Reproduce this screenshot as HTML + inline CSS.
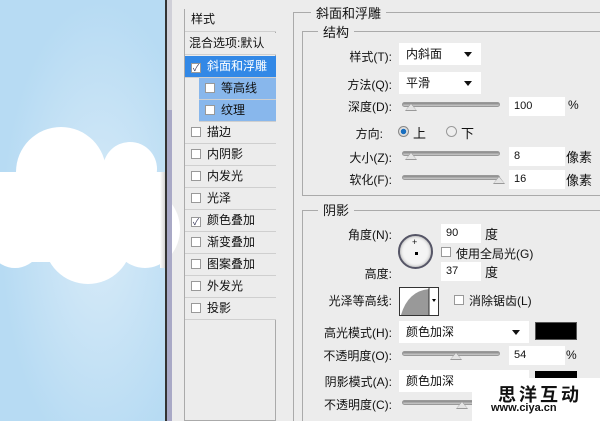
<!DOCTYPE html><html style="overflow:hidden;width:600px;height:421px"><head><meta charset="utf-8"><style>
*{margin:0;padding:0;box-sizing:border-box}
body{width:600px;height:421px;overflow:hidden;position:relative;background:#ececec;font-family:"Liberation Sans","Noto Sans CJK SC",sans-serif;font-size:12px;color:#111}
.a{position:absolute;white-space:nowrap}
.sky{left:0;top:0;width:166px;height:421px;background:radial-gradient(ellipse at 60% 55%,#d8ebf8,#b7dbf3 70%)}
.c{position:absolute;background:#fff;border-radius:50%}
.row{position:absolute;left:185px;width:91px;height:22px;border-bottom:1px solid #cfcfcf;line-height:21px;padding-left:6px;background:#ececec}
.cb{display:inline-block;width:10px;height:10px;border:1px solid #999;background:#fff;vertical-align:-1px;margin-right:6px;font-size:9px;line-height:8px;text-align:center;color:#335}
.inp{position:absolute;background:#fff;height:19px;line-height:19px;padding-left:5px;font-size:11px}
.sel{position:absolute;background:#fff;height:22px;line-height:22px;padding-left:7px;font-size:12px}
.sel:after{content:"";position:absolute;right:9px;top:9px;border:4px solid transparent;border-top:5px solid #111}
.sl{position:absolute;height:5px;border-radius:3px;background:linear-gradient(#888,#ccc);border:1px solid #999}
.th{position:absolute;width:0;height:0;border-left:6px solid transparent;border-right:6px solid transparent;border-bottom:8px solid #999}
.th:after{content:"";position:absolute;left:-5px;top:1px;border-left:5px solid transparent;border-right:5px solid transparent;border-bottom:6px solid #e4e4e4}
.lbl{position:absolute;text-align:right;width:120px}
.grp{position:absolute;border:1px solid #aaa}
.gt{position:absolute;background:#ececec;padding:0 5px;font-size:13px}
</style></head><body>
<div class="a sky"></div>
<div class="c" style="left:16px;top:127px;width:90px;height:90px"></div>
<div class="c" style="left:103px;top:142px;width:54px;height:54px"></div>
<div class="c" style="left:-20px;top:172px;width:70px;height:96px"></div>
<div class="c" style="left:44px;top:196px;width:88px;height:88px"></div>
<div class="c" style="left:110px;top:190px;width:70px;height:78px"></div>
<div class="a" style="left:0;top:172px;width:166px;height:90px;background:#fff"></div>
<div class="a" style="left:160px;top:172px;width:6px;height:96px;background:linear-gradient(90deg,#fff,#ccc)"></div>
<div class="a" style="left:165px;top:0;width:2px;height:421px;background:#333"></div>
<div class="a" style="left:167px;top:0;width:5px;height:421px;background:#a9a9c6"></div>
<div class="a" style="left:167px;top:0;width:5px;height:110px;background:#d0d0d8"></div>
<div class="a" style="left:184px;top:9px;width:92px;height:412px;border:1px solid #aaa"></div>
<div class="row" style="top:9px;height:23px">样式</div>
<div class="row" style="top:33px;padding-left:4px">混合选项:默认</div>
<div class="row" style="top:56px;background:#3288e6;color:#fff"><span class="cb">✓</span>斜面和浮雕</div>
<div class="row" style="top:78px;left:199px;width:77px;background:#88b7ec"><span class="cb"></span>等高线</div>
<div class="row" style="top:100px;left:199px;width:77px;background:#88b7ec"><span class="cb"></span>纹理</div>
<div class="row" style="top:122px"><span class="cb"></span>描边</div>
<div class="row" style="top:144px"><span class="cb"></span>内阴影</div>
<div class="row" style="top:166px"><span class="cb"></span>内发光</div>
<div class="row" style="top:188px"><span class="cb"></span>光泽</div>
<div class="row" style="top:210px"><span class="cb">✓</span>颜色叠加</div>
<div class="row" style="top:232px"><span class="cb"></span>渐变叠加</div>
<div class="row" style="top:254px"><span class="cb"></span>图案叠加</div>
<div class="row" style="top:276px"><span class="cb"></span>外发光</div>
<div class="row" style="top:298px"><span class="cb"></span>投影</div>
<div class="grp" style="left:293px;top:12px;width:320px;height:409px;border-bottom:none"></div>
<div class="gt a" style="left:311px;top:3px">斜面和浮雕</div>
<div class="grp" style="left:302px;top:31px;width:310px;height:165px"></div>
<div class="gt a" style="left:318px;top:22px">结构</div>
<div class="lbl" style="left:272px;top:48px">样式(T):</div>
<div class="sel" style="left:399px;top:43px;width:82px">内斜面</div>
<div class="lbl" style="left:272px;top:76px">方法(Q):</div>
<div class="sel" style="left:399px;top:72px;width:82px">平滑</div>
<div class="lbl" style="left:272px;top:98px">深度(D):</div>
<div class="sl" style="left:402px;top:102px;width:98px"></div><div class="th" style="left:405px;top:103px"></div>
<div class="inp" style="left:509px;top:97px;width:56px">100</div><div class="a" style="left:568px;top:98px">%</div>
<div class="lbl" style="left:263px;top:125px">方向:</div>
<div class="a" style="left:398px;top:126px;width:11px;height:11px;border-radius:50%;background:radial-gradient(#1a6fc0 40%,#ddd 45%);border:1px solid #888"></div>
<div class="a" style="left:413px;top:123px;font-size:13px">上</div>
<div class="a" style="left:446px;top:126px;width:11px;height:11px;border-radius:50%;background:#eee;border:1px solid #999"></div>
<div class="a" style="left:461px;top:123px;font-size:13px">下</div>
<div class="lbl" style="left:272px;top:149px">大小(Z):</div>
<div class="sl" style="left:402px;top:151px;width:98px"></div><div class="th" style="left:405px;top:152px"></div>
<div class="inp" style="left:509px;top:147px;width:56px">8</div><div class="a" style="left:566px;top:147px;font-size:13px">像素</div>
<div class="lbl" style="left:272px;top:171px">软化(F):</div>
<div class="sl" style="left:402px;top:175px;width:98px"></div><div class="th" style="left:493px;top:176px"></div>
<div class="inp" style="left:509px;top:170px;width:56px">16</div><div class="a" style="left:566px;top:170px;font-size:13px">像素</div>
<div class="grp" style="left:302px;top:210px;width:310px;height:211px;border-bottom:none"></div>
<div class="gt a" style="left:318px;top:200px">阴影</div>
<div class="lbl" style="left:272px;top:226px">角度(N):</div>
<div class="a" style="left:398px;top:234px;width:35px;height:35px;border-radius:50%;background:#f4f4f4;border:2px solid #556;box-shadow:inset 0 0 3px #999"></div>
<div class="a" style="left:412px;top:237px;font-size:9px">+</div>
<div class="a" style="left:415px;top:252px;width:3px;height:3px;background:#000"></div>
<div class="inp" style="left:441px;top:224px;width:40px">90</div><div class="a" style="left:485px;top:224px;font-size:13px">度</div>
<span class="a cb" style="left:441px;top:247px"></span><div class="a" style="left:456px;top:245px">使用全局光(G)</div>
<div class="lbl" style="left:272px;top:265px">高度:</div>
<div class="inp" style="left:441px;top:262px;width:40px">37</div><div class="a" style="left:485px;top:262px;font-size:13px">度</div>
<div class="lbl" style="left:272px;top:292px">光泽等高线:</div>
<div class="a" style="left:399px;top:287px;width:40px;height:29px;border:1px solid #333;background:#fff;overflow:hidden">
<svg width="38" height="27"><path d="M1 27 Q8 3 29 1 L29 27Z" fill="#999"/><line x1="29" y1="0" x2="29" y2="27" stroke="#333"/><path d="M32 11h4l-2 3z" fill="#000"/></svg></div>
<span class="a cb" style="left:454px;top:295px"></span><div class="a" style="left:469px;top:292px">消除锯齿(L)</div>
<div class="lbl" style="left:272px;top:324px">高光模式(H):</div>
<div class="sel" style="left:399px;top:321px;width:130px">颜色加深</div>
<div class="a" style="left:535px;top:322px;width:42px;height:18px;background:#000;border:1px solid #555"></div>
<div class="lbl" style="left:272px;top:347px">不透明度(O):</div>
<div class="sl" style="left:402px;top:351px;width:98px"></div><div class="th" style="left:450px;top:352px"></div>
<div class="inp" style="left:509px;top:346px;width:56px">54</div><div class="a" style="left:566px;top:348px">%</div>
<div class="lbl" style="left:272px;top:373px">阴影模式(A):</div>
<div class="sel" style="left:399px;top:370px;width:130px">颜色加深</div>
<div class="a" style="left:535px;top:371px;width:42px;height:18px;background:#000"></div>
<div class="lbl" style="left:272px;top:396px">不透明度(C):</div>
<div class="sl" style="left:402px;top:400px;width:98px"></div><div class="th" style="left:456px;top:401px"></div>
<div class="a" style="left:472px;top:378px;width:128px;height:43px;background:#fff"></div>
<div class="a" style="left:498px;top:381px;font-size:18px;font-weight:bold;letter-spacing:3px">思洋互动</div>
<div class="a" style="left:491px;top:402px;font-size:11px;font-weight:bold">www.ciya.cn</div>
</body></html>
